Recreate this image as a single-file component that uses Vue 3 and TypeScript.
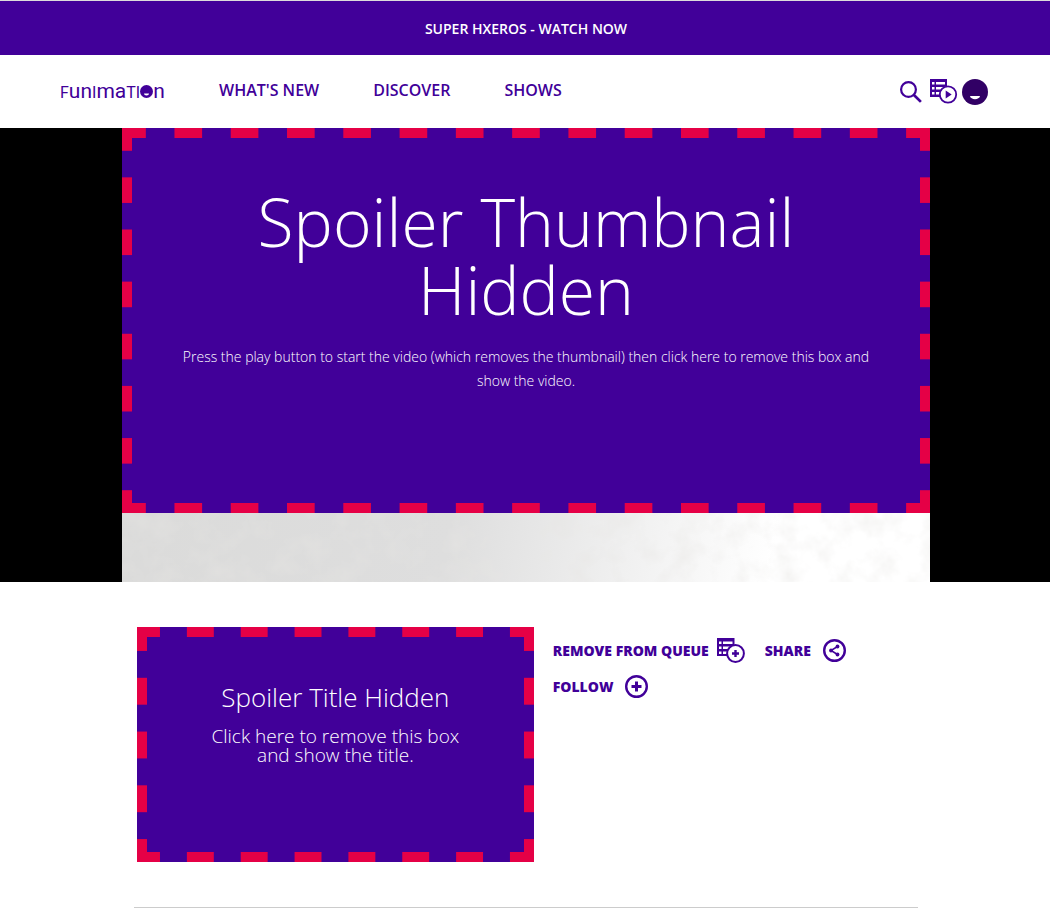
<script setup lang="ts">
import { ref } from 'vue'

interface NavLink {
  label: string
  href: string
}

const links: NavLink[] = [
  { label: "WHAT'S NEW", href: '#new' },
  { label: 'DISCOVER', href: '#discover' },
  { label: 'SHOWS', href: '#shows' },
]

const videoHidden = ref<boolean>(true)
const titleHidden = ref<boolean>(true)
</script>

<template>
  <div class="page">
    <a class="banner" href="#promo">SUPER HXEROS - WATCH NOW</a>

    <header class="topbar">
      <a class="logo" href="#home" aria-label="Funimation">
        <span class="cap">F</span><span>un</span><span class="cap">I</span><span>ma</span><span class="cap">TI</span>
        <svg class="logo-face" viewBox="0 0 13 13" aria-hidden="true">
          <circle cx="6.5" cy="6.5" r="6.5" fill="#410099" />
          <path d="M4 8.6h5a2.500 2 0 0 1-5 0z" fill="#fff" />
        </svg>
        <span>n</span>
      </a>
      <nav class="links">
        <a v-for="link in links" :key="link.label" :href="link.href">{{ link.label }}</a>
      </nav>
      <div class="tools">
        <button type="button" aria-label="Search">
          <svg width="22" height="22" viewBox="0 0 22 22" fill="none" stroke="#410099">
            <circle cx="8.5" cy="8.5" r="7.400" stroke-width="2.200" />
            <path d="M13.700 13.700l7.200 7.200" stroke-width="2.700" />
          </svg>
        </button>
        <button type="button" aria-label="My queue">
          <svg width="28" height="25" viewBox="0 0 28 25">
            <path d="M0 0h17v18H0z" fill="#410099" />
            <path
              d="M2 3h2.500v2.500H2zM6 3h9v2.500H6zM2 8h2.500v2.500H2zM6 8h9v2.500H6zM2 13h2.500v2.500H2zM6 13h5v2.500H6z"
              fill="#fff"
            />
            <circle cx="18" cy="15.500" r="8.200" fill="#fff" stroke="#410099" stroke-width="1.800" />
            <path d="M15.700 11.500v8l6-4z" fill="#410099" />
          </svg>
        </button>
        <button type="button" aria-label="Account">
          <svg width="26" height="26" viewBox="0 0 26 26">
            <circle cx="13" cy="13" r="13" fill="#310065" />
            <path d="M8 17h10c-.6 4.200-9.400 4.200-10 0z" fill="#fff" />
          </svg>
        </button>
      </div>
    </header>

    <section class="hero">
      <div class="player">
        <button v-if="videoHidden" type="button" class="spoiler spoiler-video" @click="videoHidden = false">
          <span class="video-title">Spoiler Thumbnail Hidden</span>
          <span class="video-text"
            >Press the play button to start the video (which removes the thumbnail) then click here to remove this box
            and show the video.</span
          >
        </button>
        <svg class="plaster" aria-hidden="true">
          <filter id="grain" x="0" y="0" width="100%" height="100%">
            <feTurbulence type="fractalNoise" baseFrequency="0.040" numOctaves="5" seed="8" />
            <feColorMatrix values="0 0 0 0 0.800  0 0 0 0 0.790  0 0 0 0 0.770  0.900 0 0 0 -0.380" />
          </filter>
          <rect width="100%" height="100%" filter="url(#grain)" />
        </svg>
      </div>
    </section>

    <main class="details">
      <button v-if="titleHidden" type="button" class="spoiler spoiler-name" @click="titleHidden = false">
        <span class="name-title">Spoiler Title Hidden</span>
        <span class="name-text">Click here to remove this box and show the title.</span>
      </button>
      <div class="actions">
        <button type="button" class="queue">
          REMOVE FROM QUEUE
          <svg width="28" height="25" viewBox="0 0 28 25" aria-hidden="true">
            <path d="M0 0h17.500v18H0z" fill="#410099" />
            <path
              d="M2 3.500h2.500v2.500H2zM6 3.500h9.500v2.500H6zM2 8.500h2.500v2.500H2zM6 8.500h9v2.500H6zM2 13.500h2.500v2.500H2zM6 13.500h5v2.500H6z"
              fill="#fff"
            />
            <circle cx="18.500" cy="15.500" r="8.400" fill="#fff" stroke="#410099" stroke-width="2" />
            <path d="M18.500 12v7M15 15.500h7" stroke="#410099" stroke-width="2.400" />
          </svg>
        </button>
        <button type="button">
          SHARE
          <svg width="23" height="23" viewBox="0 0 23 23" aria-hidden="true">
            <circle cx="11.500" cy="11.500" r="10.300" fill="none" stroke="#410099" stroke-width="2.400" />
            <path d="M14.500 7.500l-6.500 4 6.500 4" fill="none" stroke="#410099" stroke-width="1.500" />
            <circle cx="14.500" cy="7.500" r="1.900" fill="#410099" />
            <circle cx="8" cy="11.500" r="1.900" fill="#410099" />
            <circle cx="14.500" cy="15.500" r="1.900" fill="#410099" />
          </svg>
        </button>
        <button type="button">
          FOLLOW
          <svg width="23" height="23" viewBox="0 0 23 23" aria-hidden="true">
            <circle cx="11.500" cy="11.500" r="10.300" fill="none" stroke="#410099" stroke-width="2.400" />
            <path d="M11.500 6.500v10M6.500 11.500h10" stroke="#410099" stroke-width="3" />
          </svg>
        </button>
      </div>
    </main>
    <hr class="rule" />
  </div>
</template>

<style>
body {
  background: #fff;
}
</style>

<style scoped>
.page {
  color: #410099;
  font-family: 'Open Sans', sans-serif;
}

button {
  margin: 0;
  padding: 0;
  border: 0;
  background: none;
  color: inherit;
  font: inherit;
  cursor: pointer;
}

a {
  color: inherit;
  text-decoration: none;
}

svg {
  display: block;
  flex: none;
}

.banner {
  display: block;
  padding: 18px 0 16px;
  border-top: 1px solid #dcdcdc;
  background: #410099;
  color: #fff;
  font-size: 14px;
  font-weight: 600;
  line-height: 20px;
  text-align: center;
  text-indent: 2px;
}

.topbar {
  display: flex;
  align-items: center;
  height: 73px;
  padding: 0 62px 0 60px;
}

.logo {
  display: flex;
  align-items: baseline;
  width: 104px;
  font-family: Roboto, 'Liberation Sans', sans-serif;
  font-size: 21px;
  line-height: 28px;
}

.cap {
  font-size: 16px;
}

.logo-face {
  width: 13px;
  height: 13px;
}

.links {
  display: flex;
  gap: 54px;
  margin-left: 55px;
  padding-bottom: 4px;
  font-size: 16px;
  font-weight: 600;
  line-height: 24px;
}

.tools {
  display: flex;
  align-items: center;
  gap: 4px;
  margin-left: auto;
}

.tools button:first-child {
  margin-right: 4px;
}

.hero {
  padding: 0 120px 0 122px;
  background: #000;
}

.player {
  background: linear-gradient(100deg, #dadad9, #dedede 45%, #fff 82%);
}

.plaster {
  width: 100%;
  height: 69px;
}

.spoiler {
  --ants: #e50046 25%, #410099 25% 75%, #e50046 75%;
  display: flex;
  flex-direction: column;
  align-items: center;
  border: 10px solid transparent;
  background-color: #410099;
  background-image: linear-gradient(90deg, var(--ants)), linear-gradient(90deg, var(--ants)),
    linear-gradient(var(--ants)), linear-gradient(var(--ants));
  background-size: 56px 10px, 56px 10px, 10px 56px, 10px 56px;
  background-position: 0 -10px, 0 calc(100% + 10px), -10px 0, calc(100% + 10px) 0;
  background-repeat: round no-repeat, round no-repeat, no-repeat round, no-repeat round;
  background-origin: padding-box;
  background-clip: border-box;
  color: #fff;
  font-weight: 300;
  text-align: center;
}

.spoiler-video {
  width: 100%;
  min-height: 385px;
  padding: 49px 40px;
}

.video-title {
  font-size: 66px;
  line-height: 68px;
}

.video-text {
  margin-top: 22px;
  font-size: 14px;
  line-height: 24px;
}

.details {
  display: flex;
  gap: 19px;
  padding: 45px 135px 0 137px;
}

.spoiler-name {
  flex: 0 0 51%;
  min-height: 235px;
  padding: 42px 60px;
}

.name-title {
  font-size: 26px;
  line-height: 36px;
}

.name-text {
  margin-top: 12px;
  font-size: 19px;
  line-height: 19px;
}

.actions {
  display: flex;
  flex: 1;
  flex-wrap: wrap;
  align-content: flex-start;
  gap: 12px 20px;
  padding-top: 11px;
}

.actions button {
  display: flex;
  align-items: center;
  gap: 12px;
  height: 24px;
  font-size: 14px;
  font-weight: 800;
}

.actions .queue {
  gap: 8px;
}

.rule {
  height: 1px;
  margin: 45px 132px 0 134px;
  border: 0;
  background: #ccc;
}
</style>
